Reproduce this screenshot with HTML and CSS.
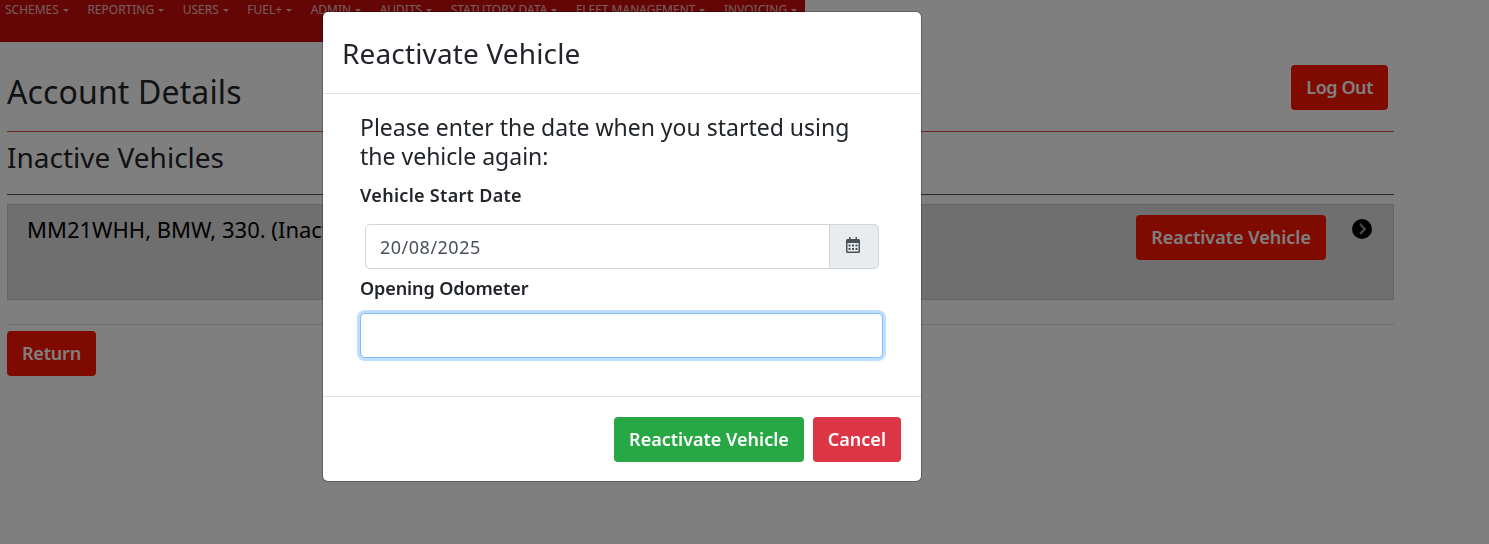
FILE: index.html
```html
<!DOCTYPE html>
<html lang="en">
<head>
<meta charset="utf-8">
<title>Reactivate Vehicle</title>
<link rel="stylesheet" href="styles.css">
</head>
<body>
<nav class="topnav">
  <a class="nav-link">SCHEMES</a>
  <a class="nav-link">REPORTING</a>
  <a class="nav-link">USERS</a>
  <a class="nav-link">FUEL+</a>
  <a class="nav-link">ADMIN</a>
  <a class="nav-link">AUDITS</a>
  <a class="nav-link">STATUTORY DATA</a>
  <a class="nav-link">FLEET MANAGEMENT</a>
  <a class="nav-link">INVOICING</a>
</nav>
<main class="page">
  <div class="title-row">
    <h1>Account Details</h1>
    <button class="btn btn-red logout">Log Out</button>
  </div>
  <hr class="rule rule-one">
  <h2>Inactive Vehicles</h2>
  <hr class="rule rule-two">
  <section class="vehicle-card">
    <span class="vehicle-name">MM21WHH, BMW, 330. (Inactive)</span>
    <button class="btn btn-red">Reactivate Vehicle</button>
    <svg class="chevron" viewBox="0 0 20 20" aria-hidden="true"><circle cx="10" cy="10" r="10" fill="#000"/><path d="M8 5.2 12.8 10 8 14.8" fill="none" stroke="#8a8a8a" stroke-width="2.4"/></svg>
  </section>
  <hr class="rule-light">
  <button class="btn btn-red return">Return</button>
</main>
<div class="backdrop"></div>
<div class="modal">
  <header class="modal-header"><h3>Reactivate Vehicle</h3></header>
  <div class="modal-body">
    <p class="prompt">Please enter the date when you started using the vehicle again:</p>
    <label class="field-label start">Vehicle Start Date</label>
    <div class="date-group">
      <input class="date-input" type="text" value="20/08/2025">
      <span class="date-addon">
        <svg class="calendar" viewBox="0 0 14 16" aria-hidden="true"><path fill="#495057" fill-rule="evenodd" d="M3 0h1.5v2h5V0H11v2h1.5A1.5 1.5 0 0 1 14 3.5v11a1.500 1.500 0 0 1-1.500 1.500h-11A1.500 1.500 0 0 1 0 14.500v-11A1.500 1.500 0 0 1 1.500 2H3zM1.500 6v8.500h11V6zM2.500 7.500h2v2h-2zm3.500 0h2v2H6zm3.500 0h2v2h-2zm-7 3.500h2v2h-2zM6 11h2v2H6zm3.500 0h2v2h-2z"/></svg>
      </span>
    </div>
    <label class="field-label second">Opening Odometer</label>
    <input class="odometer" type="text">
  </div>
  <footer class="modal-footer">
    <button class="btn btn-green">Reactivate Vehicle</button>
    <button class="btn btn-danger">Cancel</button>
  </footer>
</div>
</body>
</html>
```
FILE: styles.css
```css
* { box-sizing: border-box; }
html, body { margin: 0; height: 100%; }
body {
  background: #fff;
  color: #212529;
  font-family: "Noto Sans", Tahoma, sans-serif;
  overflow: hidden;
}
.topnav {
  width: 805px;
  height: 42px;
  background: #c80a0c;
  display: flex;
  align-items: flex-start;
  padding-left: 5px;
  gap: 18.5px;
}
.nav-link {
  color: #fff;
  opacity: .72;
  font-size: 12px;
  line-height: 19px;
  white-space: nowrap;
}
.nav-link::after {
  content: "";
  display: inline-block;
  margin-left: 4px;
  vertical-align: 2px;
  border-top: 3px solid;
  border-left: 3px solid transparent;
  border-right: 3px solid transparent;
}
.page { padding: 0 95px 0 7px; }
.title-row {
  display: flex;
  justify-content: space-between;
  align-items: flex-start;
  height: 89px;
  padding: 23px 6px 0 0;
}
h1 { margin: 8px 0 0; font-size: 32px; font-weight: 400; line-height: 38px; letter-spacing: .13px; }
.rule { margin: 0; border: 0; border-top: 1px solid #555; }
.rule-one { border-top-color: #d84a38; }
h2 { margin: 0; height: 62px; padding-top: 8px; font-size: 28px; font-weight: 400; line-height: 35px; }
.rule-two { margin-bottom: 9px; }
.vehicle-card {
  height: 96px;
  background: #dfdfdf;
  border: 1px solid #ccc;
  display: flex;
  align-items: flex-start;
  padding: 10px 21px 0 19px;
}
.vehicle-name { color: #000; font-size: 22px; line-height: 28px; flex: 1; white-space: nowrap; }
.chevron { width: 20px; height: 20px; margin: 4px 0 0 26px; }
.rule-light { margin: 24px 0 6px; border: 0; border-top: 1px solid #ddd; }
.btn {
  height: 45px;
  border: 0;
  border-radius: 4px;
  padding: 0 15px;
  color: #fff;
  font-family: inherit;
  font-size: 18px;
  font-weight: 600;
  line-height: 45px;
  white-space: nowrap;
}
.logout { letter-spacing: -.45px; }
.return { letter-spacing: -.2px; }
.btn-red { background: #ff1400; }
.btn-green { background: #28a745; }
.btn-danger { background: #dc3545; }
.backdrop { position: fixed; inset: 0; background: rgba(0,0,0,.5); }
.modal {
  position: fixed;
  left: 323px;
  top: 12px;
  width: 598px;
  height: 469px;
  background: #fff;
  border-radius: 5px;
  box-shadow: 0 0 0 1px rgba(0,0,0,.25);
}
.modal-header { height: 82px; border-bottom: 1px solid #dee2e6; padding: 19px 19px 0; }
h3 { margin: 0; font-size: 28px; font-weight: 400; line-height: 44px; letter-spacing: .15px; }
.modal-body { height: 303px; padding: 19px 37px 0 37px; border-bottom: 1px solid #dee2e6; }
.prompt { margin: 0; font-size: 23px; line-height: 29px; width: 524px; }
.field-label { display: block; font-weight: 600; font-size: 18px; line-height: 27px; margin-top: 11px; }
.field-label.start { letter-spacing: .3px; }
.field-label.second { margin-top: 6px; letter-spacing: -.1px; }
.date-group { display: flex; margin: 15px 5px 0 5px; height: 45px; }
.date-input {
  flex: 1;
  min-width: 0;
  border: 1px solid #ced4da;
  border-radius: 5px 0 0 5px;
  padding: 0 14px;
  font: inherit;
  font-size: 18px;
  letter-spacing: .5px;
  color: #495057;
}
.date-addon {
  width: 49px;
  background: #e9ecef;
  border: 1px solid #ced4da;
  border-left: 0;
  border-radius: 0 5px 5px 0;
  display: flex;
  align-items: center;
  justify-content: center;
  padding: 0 3px 3px 0;
}
.calendar { width: 14px; height: 16px; }
.odometer {
  display: block;
  width: 523px;
  height: 45px;
  margin-top: 11px;
  border: 1px solid #80bdff;
  border-radius: 5px;
  outline: 0;
  box-shadow: 0 0 0 3px rgba(0,123,255,.25);
}
.modal-footer { display: flex; justify-content: flex-end; gap: 9px; padding: 20px 20px 0; }
```
